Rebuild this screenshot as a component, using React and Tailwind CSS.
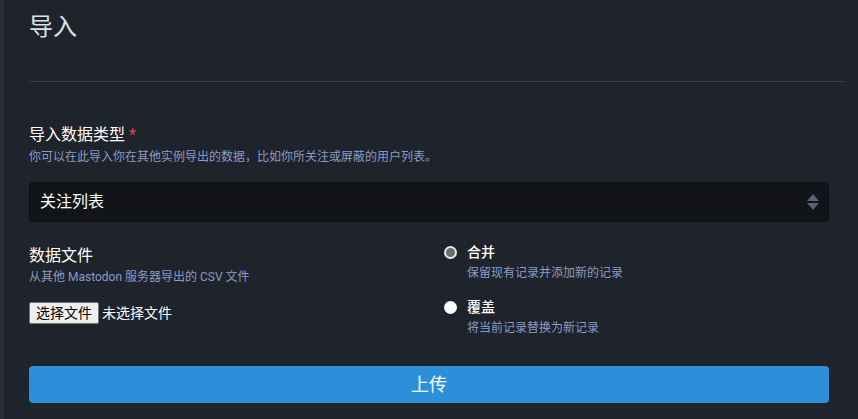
export default function App() {
  const font = { fontFamily: 'Roboto, "Noto Sans CJK SC", sans-serif' };
  return (
    <div className="w-[858px] h-[419px] overflow-hidden bg-[#1f232b] flex" style={font}>
      <div className="w-[4px] bg-[#282c35] shrink-0" />
      <div className="pl-[25px] flex flex-col">
        <div className="w-[815px] pt-[11px]">
          <h1 className="text-[24px] leading-[32px] text-[#d9e1e8]">导入</h1>
          <div className="mt-[38px] h-px bg-[#393e4c]" />
        </div>

        <div className="w-[800px] mt-[43px]">
          <div className="text-[16px] leading-[20px] text-white">
            导入数据类型 <span className="text-[#df405a]">*</span>
          </div>
          <div className="mt-[4px] text-[12px] leading-[16px] text-[#8a9bc8]">
            你可以在此导入你在其他实例导出的数据，比如你所关注或屏蔽的用户列表。
          </div>
          <div className="mt-[17px] h-[40px] rounded-[4px] bg-[#131419] border border-[#0e1014] flex items-center justify-between pl-[10px] pr-[8px]">
            <span className="text-[16px] text-white">关注列表</span>
            <svg width="14" height="18" viewBox="0 0 14 18">
              <path d="M7 1 L13 8 L1 8 Z" fill="#5b6072" />
              <path d="M1 10 L13 10 L7 17 Z" fill="#5b6072" />
            </svg>
          </div>

          <div className="grid grid-cols-[410px_390px]">
            <div className="pt-[24px]">
              <div className="text-[16px] leading-[20px] text-white">数据文件</div>
              <div className="mt-[3px] text-[12px] leading-[16px] text-[#8a9bc8]">
                从其他 Mastodon 服务器导出的 CSV 文件
              </div>
              <div className="mt-[17px] flex items-center gap-[3px]">
                <span className="h-[22px] px-[6px] flex items-center bg-[#efefef] border border-[#767676] rounded-[2px] text-[14px] text-black">
                  选择文件
                </span>
                <span className="text-[14px] text-white">未选择文件</span>
              </div>
            </div>
            <div className="pt-[20px] flex flex-col">
              <div className="flex">
                <span className="mt-[4px] ml-[5px] w-[13px] h-[13px] rounded-full bg-[#e8e8e8] flex items-center justify-center shrink-0">
                  <span className="w-[9px] h-[9px] rounded-full bg-[#6d6d6d]" />
                </span>
                <div className="ml-[10px]">
                  <div className="text-[14px] leading-[20px] text-white font-medium">合并</div>
                  <div className="mt-[3px] text-[12px] leading-[16px] text-[#8a9bc8]">保留现有记录并添加新的记录</div>
                </div>
              </div>
              <div className="flex mt-[16px]">
                <span className="mt-[4px] ml-[5px] w-[13px] h-[13px] rounded-full bg-white shrink-0" />
                <div className="ml-[10px]">
                  <div className="text-[14px] leading-[20px] text-white font-medium">覆盖</div>
                  <div className="mt-[3px] text-[12px] leading-[16px] text-[#8a9bc8]">将当前记录替换为新记录</div>
                </div>
              </div>
            </div>
          </div>

          <button className="mt-[30px] w-full h-[37px] rounded-[4px] bg-[#2b90d9] text-white text-[18px] flex items-center justify-center">
            上传
          </button>
        </div>
      </div>
    </div>
  );
}
